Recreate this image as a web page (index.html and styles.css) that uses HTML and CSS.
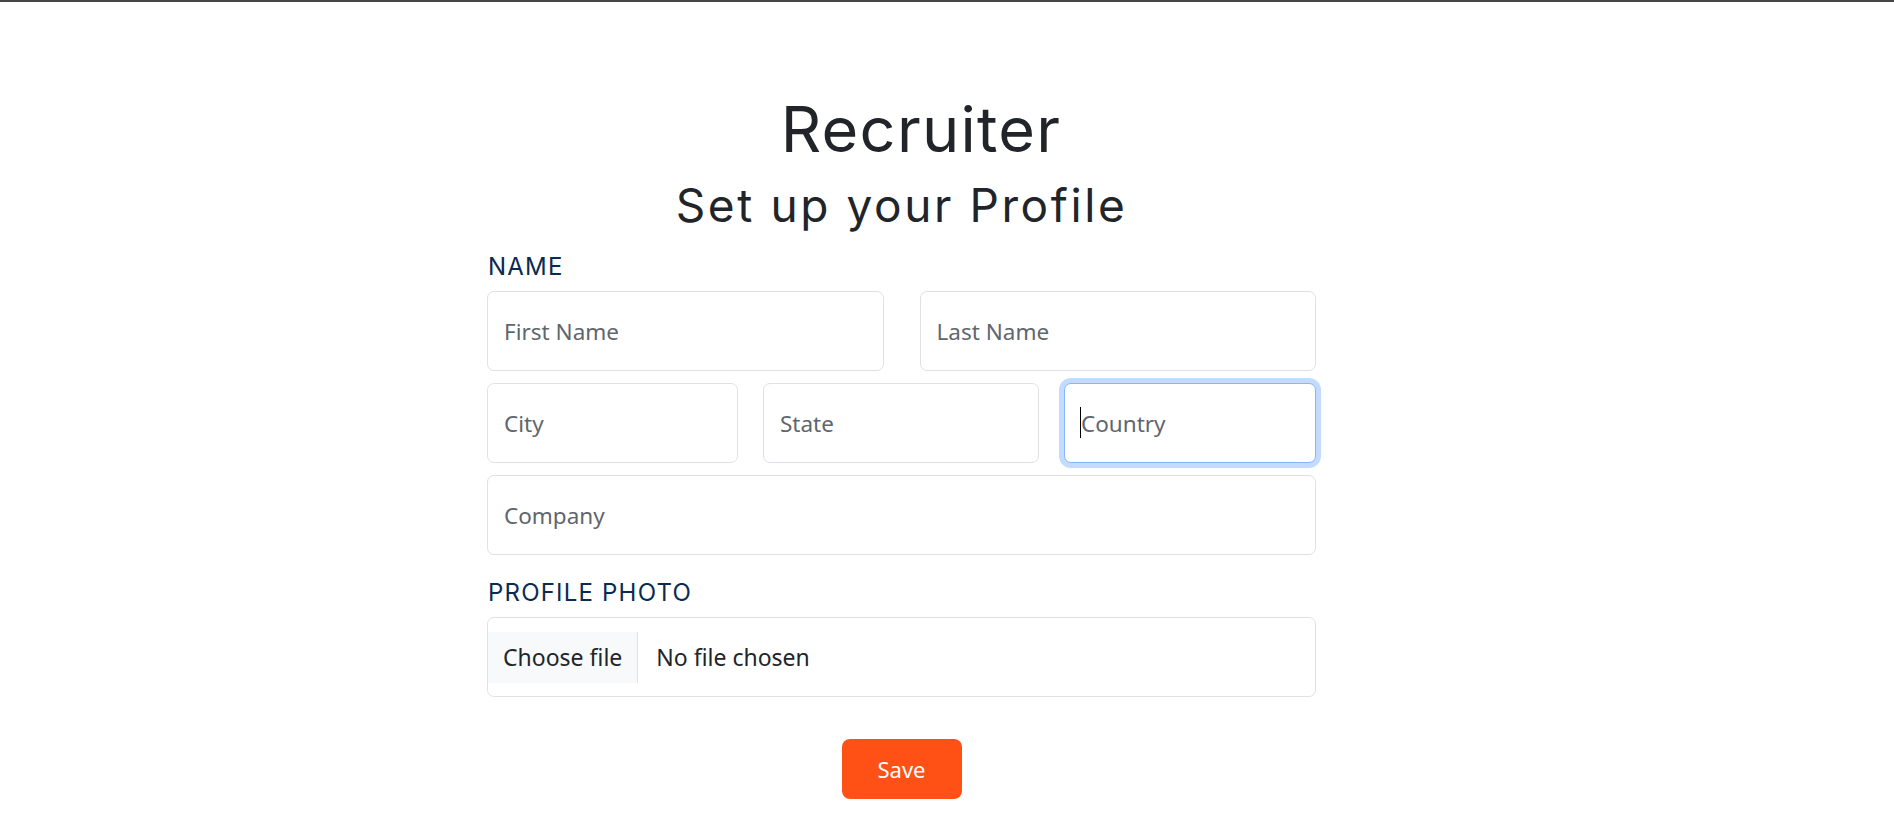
FILE: index.html
```html
<!DOCTYPE html>
<html lang="en">
<head>
<meta charset="utf-8">
<title>Recruiter - Set up your Profile</title>
<link rel="stylesheet" href="styles.css">
</head>
<body>
<div class="topline"></div>
<main class="wrap">
  <form class="profile">
    <h1 class="brand">Recruiter</h1>
    <h2 class="subtitle">Set up your Profile</h2>

    <div class="section-label">NAME</div>
    <div class="row two">
      <input class="field" type="text" placeholder="First Name">
      <input class="field" type="text" placeholder="Last Name">
    </div>
    <div class="row three">
      <input class="field" type="text" placeholder="City">
      <input class="field" type="text" placeholder="State">
      <div class="focus-wrap">
        <input class="field focused" type="text" placeholder="Country">
        <span class="caret"></span>
      </div>
    </div>
    <div class="row one">
      <input class="field" type="text" placeholder="Company">
    </div>

    <div class="section-label photo">PROFILE PHOTO</div>
    <div class="file-box">
      <span class="file-btn">Choose file</span>
      <span class="file-name">No file chosen</span>
    </div>

    <div class="actions">
      <button class="save" type="button">Save</button>
    </div>
  </form>
</main>
</body>
</html>
```

FILE: styles.css
```css
* { box-sizing: border-box; }

html, body {
  margin: 0;
  padding: 0;
  background: #ffffff;
}

body {
  font-family: "Noto Sans", "Open Sans", sans-serif;
  color: #212529;
}

.topline {
  height: 2px;
  background: #454545;
}

.wrap {
  display: flex;
  justify-content: center;
  padding-right: 91px;
}

.profile {
  width: 829px;
  display: flex;
  flex-direction: column;
}

.brand {
  margin: 89px 0 0 0;
  padding-left: 39px;
  text-align: center;
  font-family: "Inter", "Noto Sans", sans-serif;
  font-weight: 400;
  font-size: 63px;
  line-height: 76px;
  letter-spacing: 1.3px;
  color: #212529;
}

.subtitle {
  margin: 10px 0 0 0;
  text-align: center;
  font-family: "Inter", "Noto Sans", sans-serif;
  font-weight: 400;
  font-size: 46px;
  line-height: 56px;
  letter-spacing: 2.6px;
  color: #212529;
}

.section-label {
  margin-top: 19px;
  padding-left: 1px;
  font-family: "Inter", "Noto Sans", sans-serif;
  font-size: 24px;
  line-height: 29px;
  letter-spacing: 1.2px;
  color: #0b2a52;
}

.section-label.photo {
  margin-top: 23px;
}

.row {
  display: grid;
  margin-top: 12px;
}

.section-label + .row { margin-top: 10px; }

.row.two { grid-template-columns: 1fr 1fr; column-gap: 36px; }
.row.three { grid-template-columns: 251px 276px 252px; column-gap: 25px; }
.row.one { grid-template-columns: 1fr; }

.field {
  width: 100%;
  height: 80px;
  padding: 0 16px;
  border: 1px solid #dee2e6;
  border-radius: 7px;
  background: #fff;
  font-family: "Noto Sans", "Open Sans", sans-serif;
  font-size: 22.5px;
  color: #212529;
  outline: none;
}

.field::placeholder {
  color: #5f666d;
  opacity: 1;
}

.focus-wrap {
  position: relative;
}

.field.focused {
  border-color: #86b7fe;
  box-shadow: 0 0 0 5px rgba(13, 110, 253, 0.25);
}

.caret {
  position: absolute;
  left: 16px;
  top: 24px;
  width: 1px;
  height: 31px;
  background: #000;
}

.file-box {
  margin-top: 10px;
  height: 80px;
  border: 1px solid #dee2e6;
  border-radius: 7px;
  display: flex;
  align-items: center;
  font-size: 23px;
  color: #212529;
}

.file-btn {
  display: flex;
  align-items: center;
  height: 51px;
  padding: 0 15px;
  background: #f8f9fa;
  border-right: 1px solid #dee2e6;
}

.file-name {
  padding-left: 18px;
}

.actions {
  display: flex;
  justify-content: center;
  margin-top: 42px;
}

.save {
  width: 120px;
  height: 60px;
  border: none;
  border-radius: 8px;
  background: #ff5115;
  color: #ffffff;
  font-family: "Noto Sans", "Open Sans", sans-serif;
  font-size: 22px;
  cursor: pointer;
}
```
